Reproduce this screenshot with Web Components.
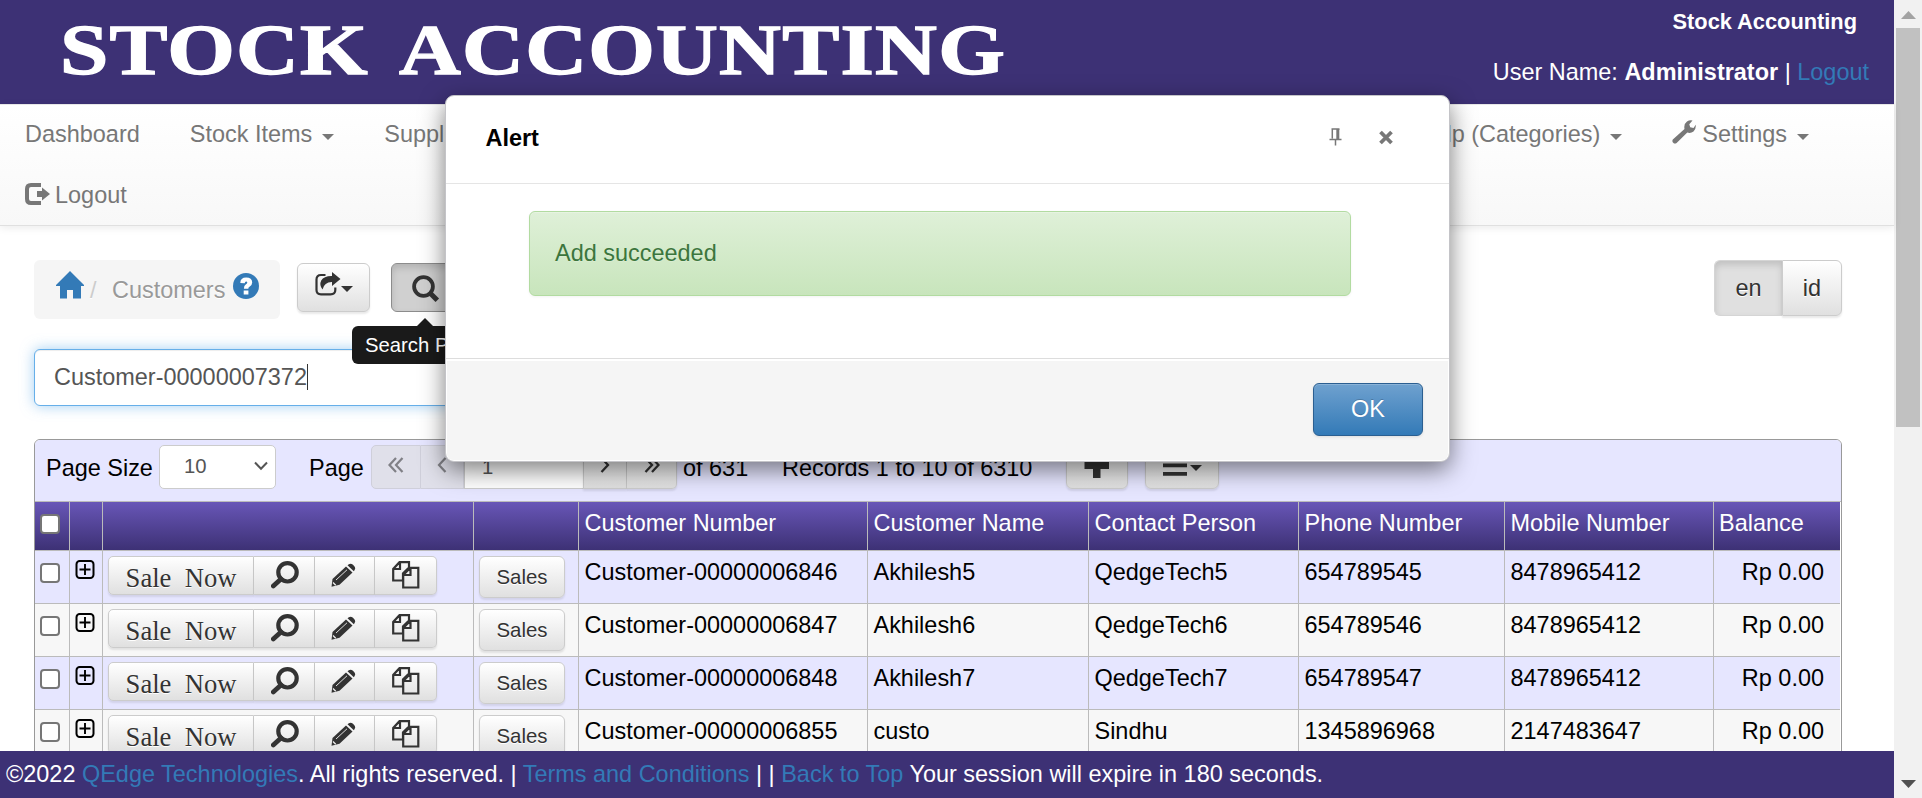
<!DOCTYPE html>
<html lang="en">
<head>
<meta charset="utf-8">
<title>Stock Accounting</title>
<style>
html,body{margin:0;padding:0;height:798px;overflow:hidden;background:#fff}
body{font-family:"Liberation Sans",Arial,sans-serif;font-size:23.46px;line-height:30px;color:#000}
</style>
</head>
<body>
<stock-app></stock-app>
<script>
const define = (name, html, init) => customElements.define(name, class extends HTMLElement {
  constructor() {
    super();
    const root = this.attachShadow({mode: 'open'});
    root.innerHTML = '<style>*{box-sizing:border-box}:host{box-sizing:border-box;display:block}svg{display:block}</style>' + html;
  }
  connectedCallback() { if (init) init(this, this.shadowRoot); }
});

/* Icon artwork: [width, height, markup] */
const ICONS = {
  caret: [12, 6, '<path d="M0 0h12L6 6z"/>'],
  logout: [26, 22, '<path d="M16 2H6Q2 2 2 6v10q0 4 4 4h10" fill="none" stroke="currentColor" stroke-width="4"/><path d="M12 8h5V4.500L25 11l-8 6.500V14h-5z"/>'],
  wrench: [24, 24, '<path d="M.8 19.500L12.500 9Q11.500 4 15 1.500Q17.500-.300 20.500.400L17.300 4.300l.9 3 3.300.700L23.800 4.800Q24.200 9 21.500 11.500Q18.500 13.700 15.300 12.500L4.600 23Q2.800 24.300 1.200 22.700Q-.200 21.200.8 19.500Z"/>'],
  home: [28, 28, '<path d="M14 0l10 10 4 4v1h-3v12.500H17V19h-6v8.500H4V15H0v-1z"/>'],
  question: [28, 28, '<circle cx="14" cy="14" r="13"/><path d="M8.300 11q0-5.500 5.900-5.500t6 5q0 2.700-2.700 4.200-1.200.700-1.200 2h-4.400q-.100-2.900 2.100-4.400 1.300-1 1.300-1.900t-1.200-.9-1.400 1.700z" fill="#fff"/><path d="M11.700 18.500h4.700v4h-4.700z" fill="#fff"/>'],
  share: [26, 24, '<path d="M10.500 3H6Q1.500 3 1.500 7.500V18Q1.500 22.300 6 22.300H15.500Q20.300 22.300 20.300 18V15.500" fill="none" stroke="currentColor" stroke-width="2.200"/><path d="M17 0l8.500 7L17 14V10Q9.500 9.800 7.500 17.500Q4 13 6.200 8.500Q9 3.800 17 4Z"/>'],
  search: [28, 28, '<circle cx="11.500" cy="11.500" r="9.400" fill="none" stroke="currentColor" stroke-width="3.800"/><path d="M17.500 17.500l7.800 7.800" stroke="currentColor" stroke-width="5"/>'],
  zoom: [28, 28, '<circle cx="16.500" cy="11.300" r="9.200" fill="none" stroke="currentColor" stroke-width="4.200"/><path d="M10 18l-7.700 7" stroke="currentColor" stroke-width="4.800" stroke-linecap="round"/>'],
  pencil: [25, 24, '<path d="M15 3.500L21.500 9.500 8.500 21.800.5 23.700 1.500 16z"/><path d="M16.500 2.300Q19-.6 22 1.800L23.500 3.500Q25 5.600 22.800 8.200z"/><path d="M5 17L16 6.800" stroke="#ddd" stroke-width="1"/><path d="M2 19.500l2.700 2.700" stroke="#eee" stroke-width="1.300"/>'],
  copy: [28, 28, '<path d="M7.500 1.200H17v5.300l-6 6V19.500H1.200V8z M8 1.200V8H1.200 M18.500 6.800h7.800v19.700H11.200V14z M18.500 6.800V14H11.200" fill="none" stroke="currentColor" stroke-width="2.200"/>'],
  expand: [20, 19, '<rect x="1.500" y="1" width="17" height="17" rx="3.200" fill="none" stroke="currentColor" stroke-width="2"/><path d="M10 4v11M4.500 9.500h11" stroke="currentColor" stroke-width="1.900"/>'],
  first: [16, 16, '<path d="M8 1L1.500 8 8 15M14.500 1L8 8l6.500 7" fill="none" stroke="currentColor" stroke-width="2.200"/>'],
  prev: [10, 16, '<path d="M8.500 1L2 8l6.500 7" fill="none" stroke="currentColor" stroke-width="2.200"/>'],
  next: [10, 16, '<path d="M1.500 1L8 8l-6.500 7" fill="none" stroke="currentColor" stroke-width="2.300"/>'],
  last: [16, 16, '<path d="M1.500 1L8 8l-6.500 7M8 1l6.500 7L8 15" fill="none" stroke="currentColor" stroke-width="2.300"/>'],
  plus: [26, 26, '<path d="M9 0h7.500v9H25v7H16.500v9H9v-9H.500V9H9z"/>'],
  bars: [24, 22, '<path d="M0 1h24v3.700H0zM0 9.500h24v3.700H0zM0 18h24v3.700H0z"/>'],
  chevron: [14, 10, '<path d="M1 1.500l6 6.300 6-6.300" fill="none" stroke="currentColor" stroke-width="2"/>'],
  pin: [13, 18, '<path d="M2.500 1h8M3.300 1v9.500M.500 11.500h12M6.500 11.500v6" fill="none" stroke="currentColor" stroke-width="1.500"/><path d="M7.300 1h3v10h-3z"/>'],
  close: [16, 15, '<path d="M2.500 2l11 11M13.500 2l-11 11" stroke="currentColor" stroke-width="3.800"/>'],
  up: [15, 8, '<path d="M0 8h15L7.500 0z"/>'],
  down: [15, 8, '<path d="M0 0h15L7.500 8z"/>']
};
define('ui-icon', '<style>:host{flex:none;line-height:0}</style><span></span>', (el, root) => {
  const [w, h, art] = ICONS[el.getAttribute('name')];
  root.querySelector('span').innerHTML = `<svg width="${w}" height="${h}" viewBox="0 0 ${w} ${h}" fill="currentColor">${art}</svg>`;
});

define('ui-button', `<style>
:host{display:flex;align-items:center;justify-content:center;border:1px solid #ccc;border-radius:6px;color:#333;
background:linear-gradient(#fff,#e0e0e0);box-shadow:0 2px 2px rgba(0,0,0,.09);text-shadow:0 1px 0 #fff}
:host([active]){background:#e0e0e0;box-shadow:inset 0 4px 7px rgba(0,0,0,.14);border-color:#d5d5d5}
:host([disabled]){background:#e0e0ea;color:#808086;box-shadow:none;border-color:#cfcfda}
</style><slot></slot>`);

define('app-header', `<style>
:host{height:104px;background:#3d3175;display:flex;justify-content:space-between;color:#fff}
.user{text-align:right;padding:6px 25px 0 0;white-space:pre}
.co{font-size:21.8px;font-weight:bold;padding-right:12px;height:51px;padding-top:1px}
a{color:#337ab7}
</style>
<svg width="1020" height="104" font-family="Liberation Serif" font-weight="bold" font-size="71" fill="#fff" stroke="#fff" stroke-width="1.300">
<text x="60" y="73.500" textLength="309" lengthAdjust="spacingAndGlyphs" letter-spacing="1">STOCK</text>
<text x="399" y="73.500" textLength="607" lengthAdjust="spacingAndGlyphs" letter-spacing="1">ACCOUNTING</text></svg>
<div class="user"><div class="co">Stock Accounting</div><div>User Name: <b>Administrator</b> | <a>Logout</a></div></div>`);

define('nav-item', `<style>:host{display:flex;align-items:center;height:58px;padding:0 25px;white-space:pre}
::slotted(ui-icon[name=caret]){margin-left:10px;margin-top:6px}</style><slot></slot>`);
define('app-nav', `<style>
:host{height:122px;border-top:1px solid #e7e7e7;border-bottom:1px solid #e0e0e0;background:linear-gradient(#fff,#f8f8f8);
box-shadow:0 2px 8px rgba(0,0,0,.08);color:#777;position:relative}
.row{display:flex;height:61px}
.gap{flex:1}
</style>
<div class="row"><nav-item>Dashboard</nav-item><nav-item>Stock Items<ui-icon name="caret"></ui-icon></nav-item><nav-item>Suppliers</nav-item>
<span class="gap"></span><nav-item>Help (Categories)<ui-icon name="caret"></ui-icon></nav-item>
<nav-item style="padding-right:85px"><ui-icon name="wrench" style="margin:-4px 6px 0 0"></ui-icon>Settings<ui-icon name="caret"></ui-icon></nav-item></div>
<div class="row"><nav-item><ui-icon name="logout" style="margin:-3px 4px 0 0"></ui-icon>Logout</nav-item></div>`);

define('app-toolbar', `<style>
:host{display:flex;height:59px;position:relative}
.crumb{width:246px;height:59px;background:#f5f5f5;border-radius:6px;display:flex;padding:0 0 0 22px;color:#999}
.crumb ui-icon{color:#337ab7;margin-top:11px}
.crumb span{margin-top:15px;text-shadow:0 1px 0 #fff}
.slash{color:#ccc;margin:0 13px 0 6px;width:9px}
.share{width:73px;height:49px;margin:3px 0 0 17px}
.find{width:68px;height:49px;margin:3px 0 0 21px;background:#d0d0d0!important;border-color:#8c8c8c!important;padding-right:0;justify-content:flex-start}
.lang{margin-left:auto;display:flex;height:56px}
.lang ui-button{padding-bottom:1px}
.tip{position:absolute;left:318px;top:66px;width:170px;height:38px;border-radius:6px;background:#1a1a1a;color:#fff;font-size:20.3px;line-height:30px;padding:4px 0 0 13px}
.tip:before{content:"";position:absolute;left:65px;top:-8px;border:8px solid transparent;border-top:0;border-bottom-color:#1a1a1a}
</style>
<div class="crumb"><ui-icon name="home"></ui-icon><span class="slash">/</span><span style="width:120px">Customers</span><ui-icon name="question" style="margin-top:12px"></ui-icon></div>
<ui-button class="share"><ui-icon name="share" style="margin:-8px 0 0 0"></ui-icon><ui-icon name="caret" style="margin-top:2px"></ui-icon></ui-button>
<ui-button class="find" active><ui-icon name="search" style="margin:3px 0 0 20px"></ui-icon></ui-button>
<div class="lang"><ui-button active style="width:68px;border-radius:6px 0 0 6px;border-right:0">en</ui-button><ui-button style="width:60px;border-radius:0 6px 6px 0">id</ui-button></div>
<div class="tip">Search Panel</div>`);

define('search-field', `<style>
:host{width:1000px;height:57px;margin-top:30px;border:1px solid #66afe9;border-radius:6px;color:#555;background:#fff;
box-shadow:inset 0 1px 1px rgba(0,0,0,.075),0 0 14px rgba(102,175,233,.6);display:flex;align-items:center;padding:0 0 2px 19px}
i{width:1px;height:26px;background:#333}
</style><slot></slot><i></i>`);

define('grid-pager', `<style>
:host{display:flex;height:62px;border-bottom:1px solid #bbb;background:#e6e6ff;padding:5px 0 0 11px;white-space:pre;border-radius:5px 5px 0 0}
.t{height:43px;line-height:30px;padding-top:8px;flex:none}
.sel,.page{height:44px;background:#fff;border:1px solid #ccc;font-size:20.3px;color:#555;display:flex;align-items:center;flex:none}
.sel{width:117px;border-radius:5px;padding:0 7px 2px 24px;justify-content:space-between}
.page{width:119px;padding-left:17px;border-right:0}
ui-button{height:44px;padding-bottom:4px;flex:none}
</style>
<div class="t" style="width:113px">Page Size</div><div class="sel">10<ui-icon name="chevron"></ui-icon></div>
<div class="t" style="width:62px;margin-left:33px">Page</div>
<ui-button disabled style="width:50px;border-radius:5px 0 0 5px"><ui-icon name="first"></ui-icon></ui-button>
<ui-button disabled style="width:43px;border-radius:0;border-left:0;"><ui-icon name="prev"></ui-icon></ui-button>
<div class="page">1</div>
<ui-button style="width:44px;border-radius:0"><ui-icon name="next"></ui-icon></ui-button>
<ui-button style="width:50px;border-radius:0 5px 5px 0;border-left:0"><ui-icon name="last"></ui-icon></ui-button>
<div class="t" style="width:99px;margin-left:6px">of 631</div><div class="t" style="width:284px">Records 1 to 10 of 6310</div>
<ui-button style="width:62px"><ui-icon name="plus" style="margin-top:1px"></ui-icon></ui-button>
<ui-button style="width:74px;margin-left:17px"><ui-icon name="bars" style="margin-top:-1px"></ui-icon><ui-icon name="caret" style="margin:6px 0 0 3px"></ui-icon></ui-button>`);

const COLS = '35px 33px 371px 105px 289px 221px 210px 206px 209px 127px';
define('check-box', `<style>:host{width:20px;height:20px;border:2px solid #767676;border-radius:4px;background:#fff}</style>`);
define('grid-head', `<style>
:host{display:grid;grid-template-columns:${COLS};height:49px;border-bottom:1px solid #bbb;background:linear-gradient(#6856b7,#3d3175);color:#fff;margin-right:1px}
div{border-right:1px solid #bbb;padding:6px 0 0 5.5px}div:last-child{border:0;padding-left:5px}
</style><div style="padding:12px 0 0 5px"><check-box></check-box></div><div></div><div></div><div></div>
<div>Customer Number</div><div>Customer Name</div><div>Contact Person</div><div>Phone Number</div><div>Mobile Number</div><div>Balance</div>`);

define('grid-row', `<style>
:host{display:grid;grid-template-columns:${COLS};height:53px;border-bottom:1px solid #bbb;background:#e6e6ff;margin-right:1px}
:host([alt]){background:#f7f7f7}
.c{border-right:1px solid #bbb;padding:6px 0 0 5.5px;overflow:hidden}.c:last-child{border:0;text-align:right;padding-right:17px}
.g{display:flex;padding:5px 0 0 5px}
.g ui-button{height:39px;border-radius:0;border-left:0}
.sale{font-family:"Liberation Serif",serif;font-size:26.6px;white-space:pre;padding-top:5px}
.s{width:86px;height:42px;font-size:20.4px}
</style>
<div class="c" style="padding:12px 0 0 5px"><check-box></check-box></div>
<div class="c" style="padding:9px 0 0 5px"><ui-icon name="expand"></ui-icon></div>
<div class="c g"><ui-button class="sale" style="width:146px;border-left:1px solid #ccc;border-radius:5px 0 0 5px">Sale  Now</ui-button>
<ui-button style="width:61px"><ui-icon name="zoom" style="margin:-2px 0 0 1px"></ui-icon></ui-button><ui-button style="width:60px"><ui-icon name="pencil" style="margin:-2px 3px 0 0"></ui-icon></ui-button>
<ui-button style="width:62px;border-radius:0 5px 5px 0"><ui-icon name="copy" style="margin-top:-2px"></ui-icon></ui-button></div>
<div class="c" style="padding:5px 0 0 5px"><ui-button class="s">Sales</ui-button></div>
<div class="c"><slot name="number"></slot></div><div class="c"><slot name="name"></slot></div><div class="c"><slot name="contact"></slot></div>
<div class="c"><slot name="phone"></slot></div><div class="c"><slot name="mobile"></slot></div><div class="c">Rp 0.00</div>`);

const ROWS = [
  ['Customer-00000006846', 'Akhilesh5', 'QedgeTech5', '654789545', '8478965412'],
  ['Customer-00000006847', 'Akhilesh6', 'QedgeTech6', '654789546', '8478965412'],
  ['Customer-00000006848', 'Akhilesh7', 'QedgeTech7', '654789547', '8478965412'],
  ['Customer-00000006855', 'custo', 'Sindhu', '1345896968', '2147483647']
];
define('data-grid', `<style>:host{margin-top:33px;height:400px;border:1px solid #999;border-radius:6px;background:#fff}</style>
<grid-pager></grid-pager><grid-head></grid-head><div id="rows"></div>`, (el, root) => {
  const keys = ['number', 'name', 'contact', 'phone', 'mobile'];
  root.getElementById('rows').innerHTML = ROWS.map((r, i) =>
    `<grid-row ${i % 2 ? 'alt' : ''}>${r.map((v, k) => `<span slot="${keys[k]}">${v}</span>`).join('')}</grid-row>`).join('');
});

define('app-footer', `<style>:host{height:47px;background:#3d3175;color:#fff;padding:8px 0 0 6px;white-space:pre;position:relative}a{color:#337ab7}</style>©2022 <a>QEdge Technologies</a>. All rights reserved. | <a>Terms and Conditions</a> | | <a>Back to Top</a> Your session will expire in 180 seconds.`);

define('scroll-bar', `<style>
:host{width:28px;height:798px;background:#f1f1f1;display:flex;flex-direction:column;align-items:center;color:#a3a3a3}
.thumb{width:24px;height:399px;background:#c1c1c1;margin-bottom:auto}
</style><ui-icon name="up" style="margin:11px 0 9px"></ui-icon><div class="thumb"></div><ui-icon name="down" style="margin-bottom:10px;color:#505050"></ui-icon>`);

define('alert-dialog', `<style>
:host{position:absolute;left:445px;top:95px;width:1005px;height:367px;background:#fff;border:1px solid #c4c4c8;
border-radius:9px;box-shadow:0 8px 24px rgba(0,0,0,.5);display:flex;flex-direction:column}
header{height:88px;border-bottom:1px solid #e5e5e5;display:flex;align-items:center;padding:0 55px 4px 39.5px;font-weight:bold;flex:none}
header ui-icon{color:#777}
.pin{margin:-1px 36px 0 auto}
.x{margin-top:-1px}
.body{height:174px;padding:27px 98px 0 83px}
.ok{height:85px;border:1px solid #b2dba1;border-radius:6px;background:linear-gradient(#dff0d8,#c8e5bc);color:#3c763d;padding:26px 25px;
box-shadow:inset 0 1px 0 rgba(255,255,255,.25),0 1px 3px rgba(0,0,0,.05);text-shadow:0 1px 0 rgba(255,255,255,.2)}
footer{border-top:1px solid #ddd;padding:2px 1px 1px;flex:1;display:flex}
.f{flex:1;background:#f5f5f5;border-radius:0 0 6px 6px;display:flex;justify-content:flex-end;padding:22px 25px 0 0}
.btn{width:110px;height:53px;padding-bottom:2px;color:#fff;border-color:#2b5f91;background:linear-gradient(#6fa1cf,#337ab7);text-shadow:0 -1px 0 rgba(0,0,0,.2);
box-shadow:inset 0 1px 0 rgba(255,255,255,.2),0 1px 3px rgba(0,0,0,.1)}
</style>
<header><slot name="title"></slot><ui-icon class="pin" name="pin"></ui-icon><ui-icon class="x" name="close"></ui-icon></header>
<div class="body"><div class="ok"><slot></slot></div></div>
<footer><div class="f"><ui-button class="btn">OK</ui-button></div></footer>`);

define('stock-app', `<style>
:host{display:flex;width:1922px;height:798px;position:relative;overflow:hidden}
.page{width:1894px;height:798px;display:flex;flex-direction:column}
main{flex:1;min-height:0;overflow:hidden;padding:34px 52px 0 34px}
app-header,app-nav,app-footer{flex:none}
</style>
<div class="page"><app-header></app-header><app-nav></app-nav>
<main><app-toolbar></app-toolbar><search-field>Customer-00000007372</search-field><data-grid></data-grid></main>
<app-footer></app-footer></div>
<scroll-bar></scroll-bar>
<alert-dialog><span slot="title">Alert</span>Add succeeded</alert-dialog>`);
</script>
</body>
</html>
